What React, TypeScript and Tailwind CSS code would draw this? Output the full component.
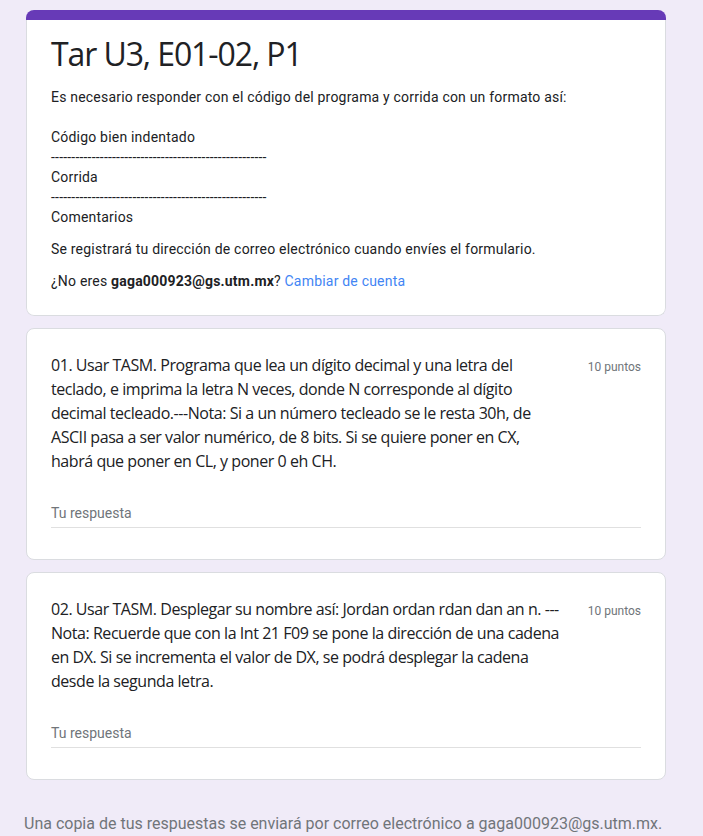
import React from "react";

const dashes = "-".repeat(53);

type Question = {
  lines: string[];
};

const questions: Question[] = [
  {
    lines: [
      "01. Usar TASM. Programa que lea un dígito decimal y una letra del",
      "teclado, e imprima la letra N veces, donde N corresponde al dígito",
      "decimal tecleado.---Nota: Si a un número tecleado se le resta 30h, de",
      "ASCII pasa a ser valor numérico, de 8 bits. Si se quiere poner en CX,",
      "habrá que poner en CL, y poner 0 eh CH.",
    ],
  },
  {
    lines: [
      "02. Usar TASM. Desplegar su nombre así: Jordan ordan rdan dan an n. ---",
      "Nota: Recuerde que con la Int 21 F09 se pone la dirección de una cadena",
      "en DX. Si se incrementa el valor de DX, se podrá desplegar la cadena",
      "desde la segunda letra.",
    ],
  },
];

function QuestionCard({ q }: { q: Question }) {
  return (
    <div className="rounded-lg border border-[#dadce0] bg-white px-6 pt-6 pb-[31px]">
      <div className="flex items-start">
        <div className="w-[526px] font-['Open_Sans',sans-serif] text-[16px] leading-6 tracking-[-0.45px] text-[#202124]">
          {q.lines.map((l, i) => (
            <div key={i} className="whitespace-nowrap">
              {l}
            </div>
          ))}
        </div>
        <div className="ml-auto pt-[5px] font-['Roboto',sans-serif] text-[12px] leading-[18px] text-[#70757a]">
          10 puntos
        </div>
      </div>
      <div className="mt-[30px] border-b border-[#e0e0e0] pb-[4px] font-['Roboto',sans-serif] text-[14px] leading-5 text-[#70757a]">
        Tu respuesta
      </div>
    </div>
  );
}

export default function App() {
  return (
    <div className="min-h-[836px] bg-[#f0ebf8] pt-[10px]">
      <div className="ml-[26px] flex w-[640px] flex-col gap-3">
        <div className="overflow-hidden rounded-lg">
          <div className="h-[10px] bg-[#673ab7]" />
          <div className="rounded-b-lg border-x border-b border-[#dadce0] bg-white px-6 pt-[14px] pb-[24px] font-['Roboto',sans-serif] text-[14px] leading-5 tracking-[0.2px] text-[#202124]">
            <h1 className="font-['Open_Sans',sans-serif] text-[32px] leading-10 tracking-[-1.1px] text-[#202124]">
              Tar U3, E01-02, P1
            </h1>
            <div className="mt-[13px]">
              <p>
                Es necesario responder con el código del programa y corrida con
                un formato así:
              </p>
              <p>&nbsp;</p>
              <p>Código bien indentado</p>
              <p>{dashes}</p>
              <p>Corrida</p>
              <p>{dashes}</p>
              <p>Comentarios</p>
            </div>
            <p className="mt-3">
              Se registrará tu dirección de correo electrónico cuando envíes el
              formulario.
            </p>
            <p className="mt-3">
              ¿No eres <span className="font-bold">gaga000923@gs.utm.mx</span>?{" "}
              <a className="text-[#4285f4]">Cambiar de cuenta</a>
            </p>
          </div>
        </div>

        {questions.map((q, i) => (
          <QuestionCard key={i} q={q} />
        ))}
      </div>

      <p className="mt-[32px] ml-6 font-['Roboto',sans-serif] text-[16px] leading-6 text-[#70757a]">
        Una copia de tus respuestas se enviará por correo electrónico a
        gaga000923@gs.utm.mx.
      </p>
    </div>
  );
}
